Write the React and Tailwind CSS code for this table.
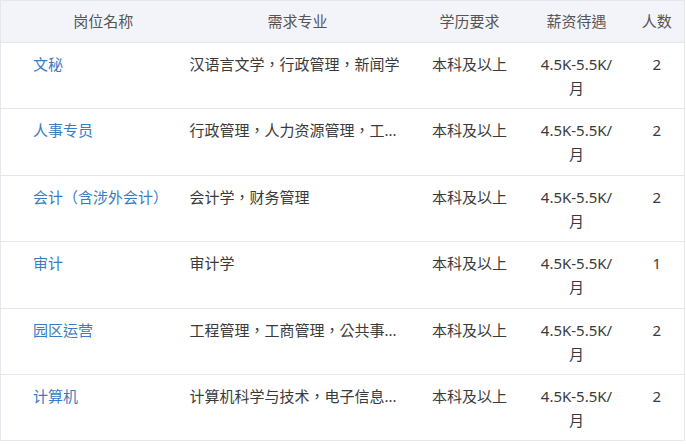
const rows = [
    { name: "文秘", major: "汉语言文学，行政管理，新闻学", edu: "本科及以上", salary: "4.5K-5.5K/月", count: 2 },
    { name: "人事专员", major: "行政管理，人力资源管理，工...", edu: "本科及以上", salary: "4.5K-5.5K/月", count: 2 },
    { name: "会计（含涉外会计）", major: "会计学，财务管理", edu: "本科及以上", salary: "4.5K-5.5K/月", count: 2 },
    { name: "审计", major: "审计学", edu: "本科及以上", salary: "4.5K-5.5K/月", count: 1 },
    { name: "园区运营", major: "工程管理，工商管理，公共事...", edu: "本科及以上", salary: "4.5K-5.5K/月", count: 2 },
    { name: "计算机", major: "计算机科学与技术，电子信息...", edu: "本科及以上", salary: "4.5K-5.5K/月", count: 2 },
];

export default function App() {
    return (
        <div
            className="w-[686px] h-[444px] bg-white overflow-hidden"
            style={{ fontFamily: '"Noto Sans", "Noto Sans CJK TC", sans-serif' }}
        >
            <table className="w-[685px] table-fixed border-collapse border border-[#e6e7ec] text-[15px]">
                <colgroup>
                    <col className="w-[175px]" />
                    <col className="w-[244px]" />
                    <col className="w-[100px]" />
                    <col className="w-[114px]" />
                    <col />
                </colgroup>
                <thead>
                    <tr className="h-[42px] bg-[#f3f4f9] border-b border-[#e6e7ec] text-[#555]">
                        <th className="font-normal text-center pl-[30px]">岗位名称</th>
                        <th className="font-normal text-center">需求专业</th>
                        <th className="font-normal text-center">学历要求</th>
                        <th className="font-normal text-center">薪资待遇</th>
                        <th className="font-normal text-center pr-[4px]">人数</th>
                    </tr>
                </thead>
                <tbody>
                    {rows.map((r) => (
                        <tr key={r.name} className="h-[66.4px] border-b border-[#e6e7ec] align-top leading-[24px] text-[#3a3a3a]">
                            <td className="pl-[32px] pt-[9px] text-[#3a7cc2]">{r.name}</td>
                            <td className="pl-[14px] pr-[10px] pt-[9px] whitespace-nowrap overflow-hidden">{r.major}</td>
                            <td className="pt-[9px] text-center">{r.edu}</td>
                            <td className="pt-[9px] px-[18px] text-center">{r.salary}</td>
                            <td className="pt-[9px] text-center pr-[4px]">{r.count}</td>
                        </tr>
                    ))}
                </tbody>
            </table>
        </div>
    );
}
